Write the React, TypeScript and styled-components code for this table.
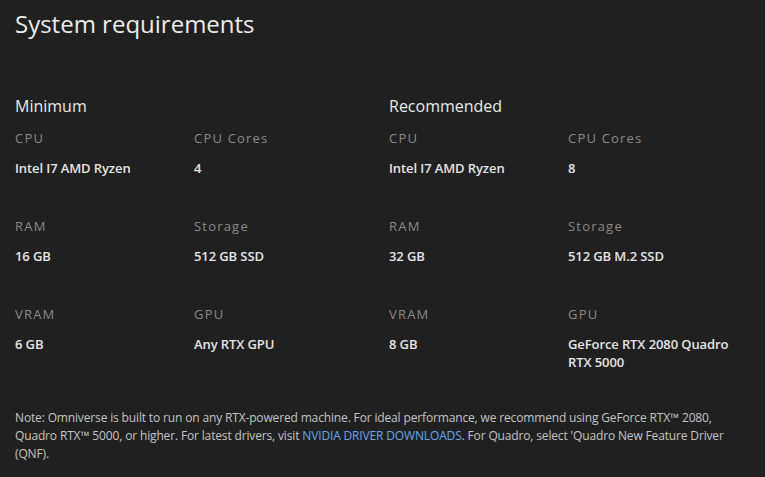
import React from 'react';
import styled, { createGlobalStyle } from 'styled-components';

const GlobalStyle = createGlobalStyle`
  html, body {
    margin: 0;
    padding: 0;
    background: #202020;
  }
  body {
    font-family: 'Open Sans', 'Noto Sans', sans-serif;
    color: #e6e6e6;
  }
`;

const Page = styled.main`
  width: 765px;
  min-height: 477px;
  box-sizing: border-box;
  padding: 7px 15px 0;
  background: #202020;
`;

const Title = styled.h1`
  margin: 0;
  font-size: 24px;
  font-weight: 400;
  line-height: 33px;
  color: #ececec;
`;

const Columns = styled.div`
  display: grid;
  grid-template-columns: 374px 1fr;
  margin-top: 55px;
`;

const Section = styled.section``;

const SectionTitle = styled.h2`
  margin: 0 0 12px;
  font-size: 16px;
  font-weight: 500;
  line-height: 22px;
  color: #eaeaea;
`;

const SpecGrid = styled.dl`
  display: grid;
  grid-template-columns: 179px 1fr;
  row-gap: 28px;
  margin: 0;
`;

const Spec = styled.div``;

const Label = styled.dt`
  font-size: 13px;
  line-height: 18px;
  letter-spacing: 1.2px;
  color: #8a8a8a;
  margin-bottom: 12px;
`;

const Value = styled.dd`
  margin: 0;
  font-size: 13px;
  font-weight: 600;
  line-height: 18px;
  letter-spacing: -0.1px;
  color: #e4e4e4;
  min-height: 30px;
  max-width: 170px;
`;

const Note = styled.p`
  margin: 38px 0 0;
  font-size: 12px;
  line-height: 18px;
  letter-spacing: -0.15px;
  color: #c4c4c4;
`;

const NoteLink = styled.a`
  color: #6aa5ec;
  text-decoration: none;
`;

type Item = { label: string; value: string };

const minimum: Item[] = [
  { label: 'CPU', value: 'Intel I7 AMD Ryzen' },
  { label: 'CPU Cores', value: '4' },
  { label: 'RAM', value: '16 GB' },
  { label: 'Storage', value: '512 GB SSD' },
  { label: 'VRAM', value: '6 GB' },
  { label: 'GPU', value: 'Any RTX GPU' },
];

const recommended: Item[] = [
  { label: 'CPU', value: 'Intel I7 AMD Ryzen' },
  { label: 'CPU Cores', value: '8' },
  { label: 'RAM', value: '32 GB' },
  { label: 'Storage', value: '512 GB M.2 SSD' },
  { label: 'VRAM', value: '8 GB' },
  { label: 'GPU', value: 'GeForce RTX 2080 Quadro RTX 5000' },
];

const Requirements = ({ title, items }: { title: string; items: Item[] }) => (
  <Section>
    <SectionTitle>{title}</SectionTitle>
    <SpecGrid>
      {items.map((item) => (
        <Spec key={item.label}>
          <Label>{item.label}</Label>
          <Value>{item.value}</Value>
        </Spec>
      ))}
    </SpecGrid>
  </Section>
);

const App = () => (
  <Page>
    <GlobalStyle />
    <Title>System requirements</Title>
    <Columns>
      <Requirements title="Minimum" items={minimum} />
      <Requirements title="Recommended" items={recommended} />
    </Columns>
    <Note>
      Note: Omniverse is built to run on any RTX-powered machine. For ideal performance, we
      recommend using GeForce RTX™ 2080, Quadro RTX™ 5000, or higher. For latest drivers,
      visit <NoteLink href="#">NVIDIA DRIVER DOWNLOADS</NoteLink>. For Quadro, select 'Quadro
      New Feature Driver (QNF).
    </Note>
  </Page>
);

export default App;
